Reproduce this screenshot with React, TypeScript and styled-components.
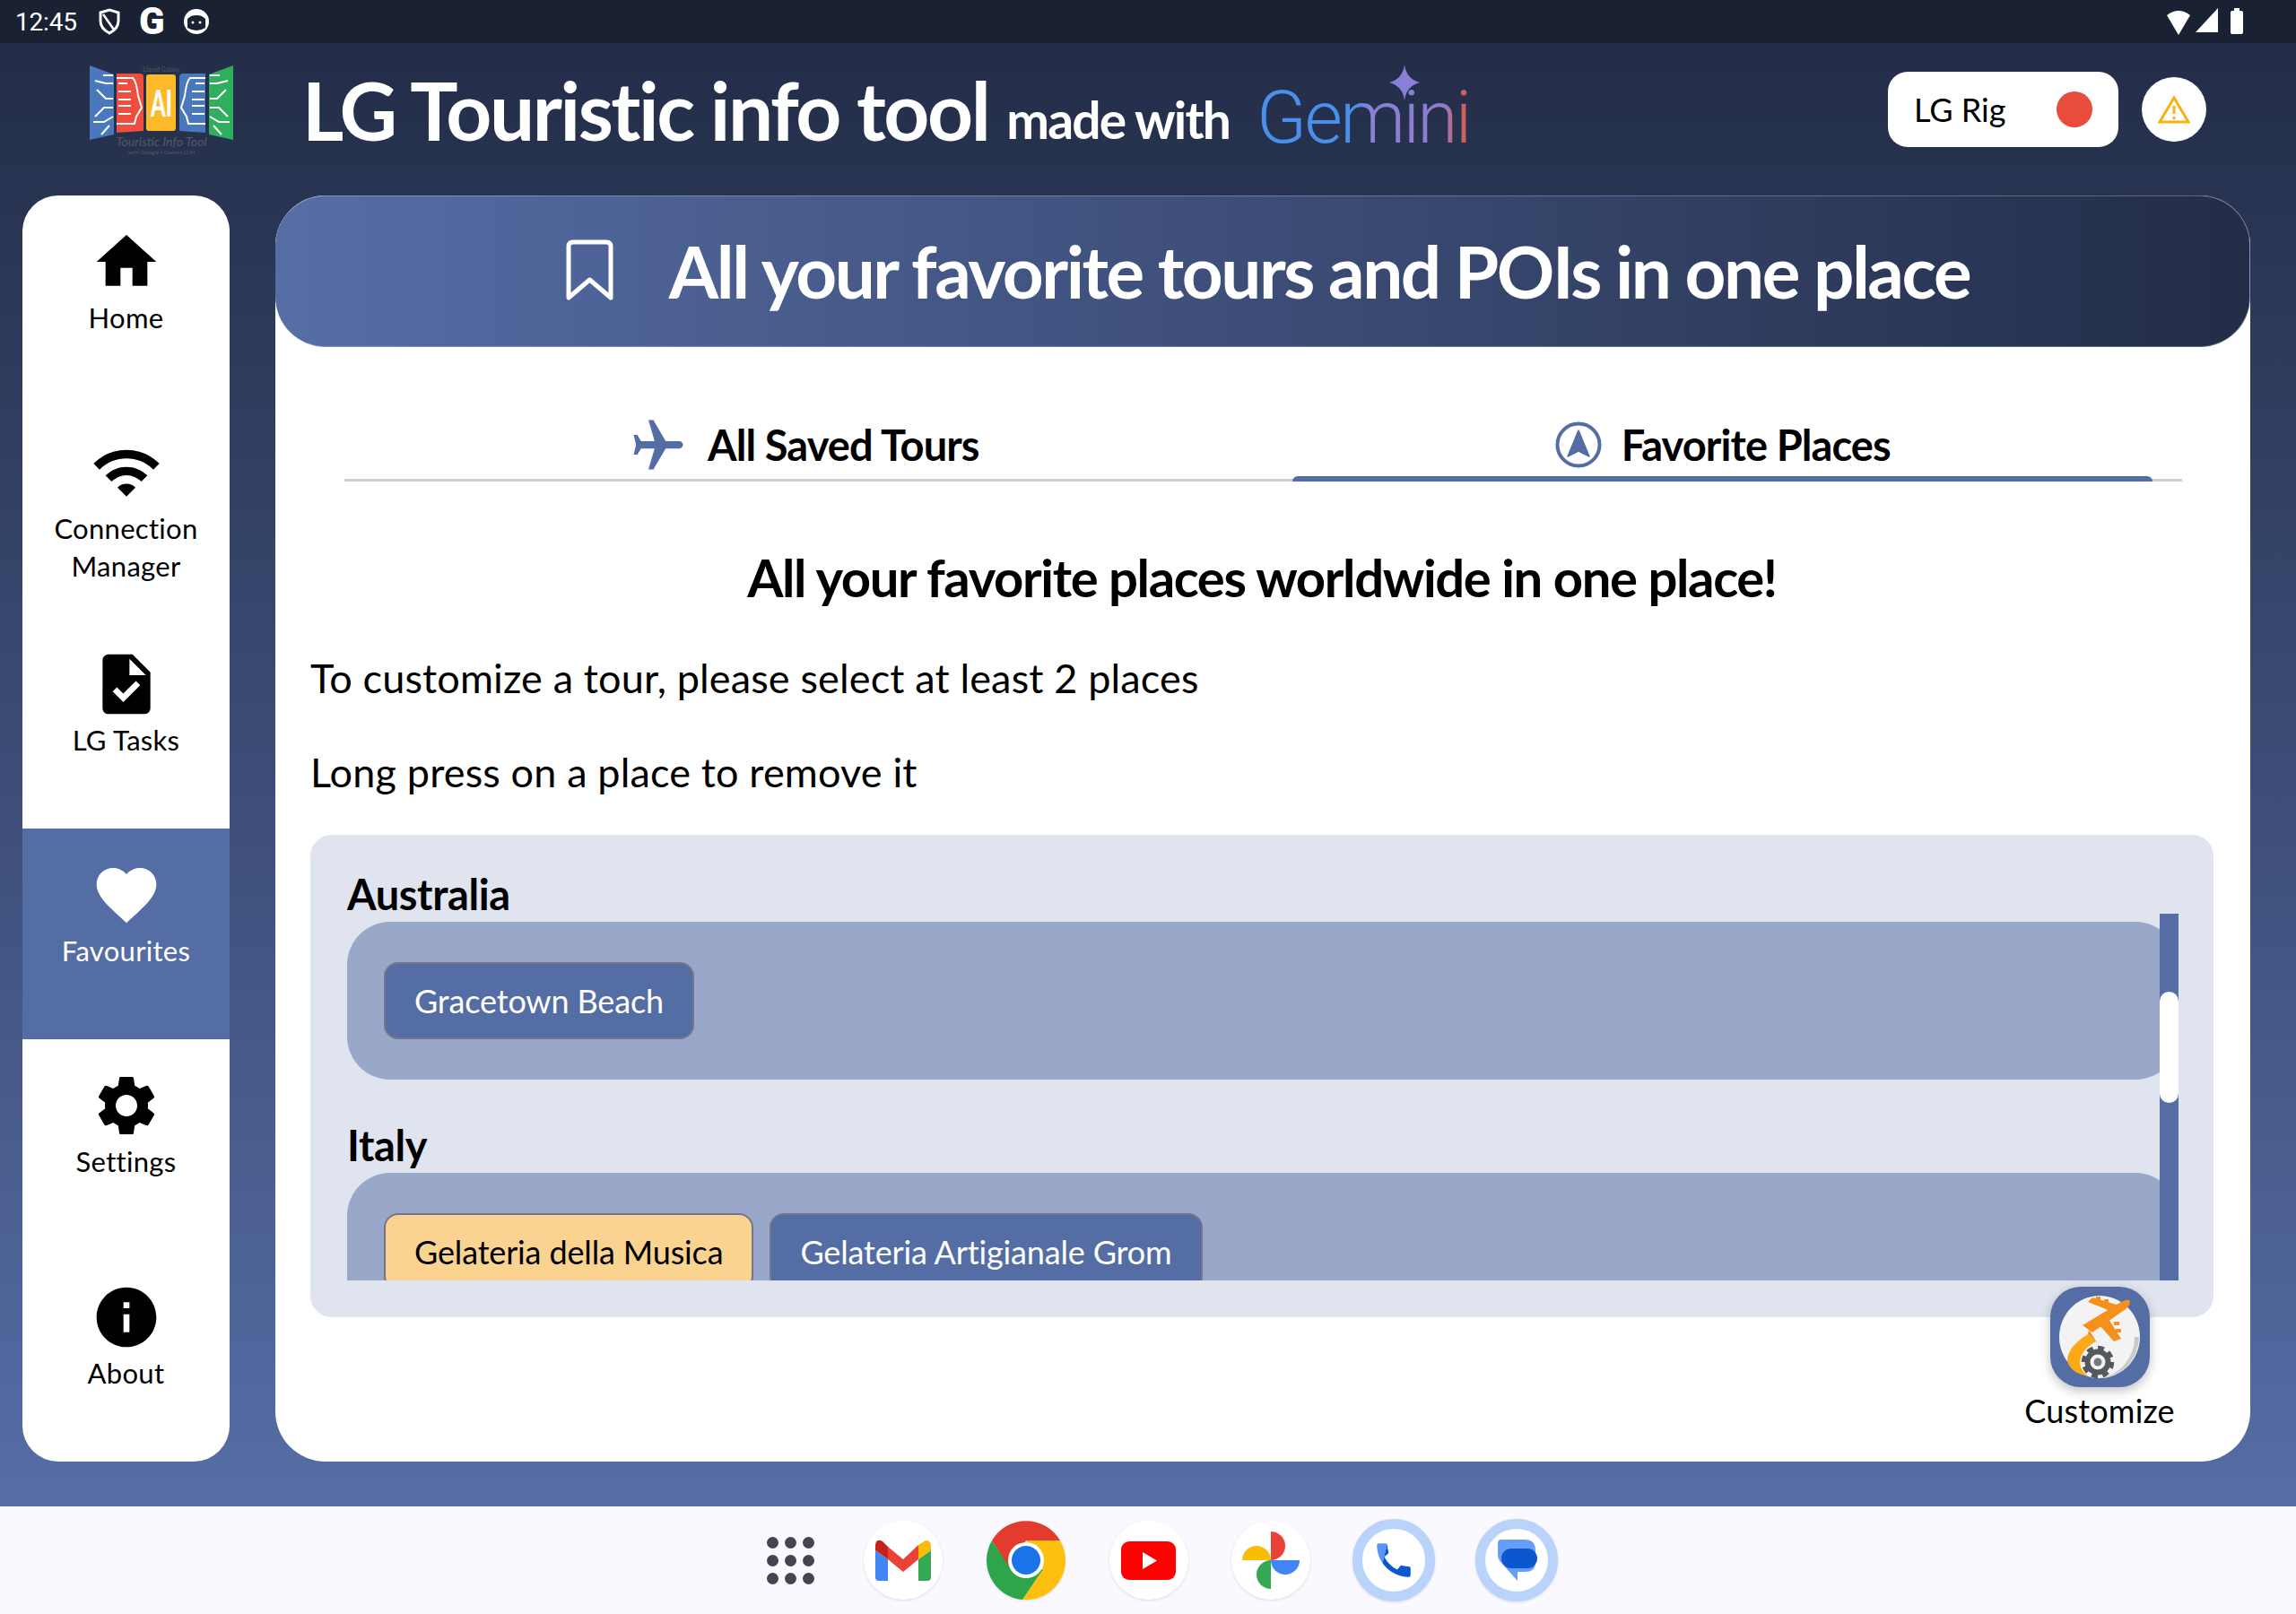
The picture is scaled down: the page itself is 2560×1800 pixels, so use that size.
import React from 'react';
import styled, { createGlobalStyle } from 'styled-components';
import { MdHome, MdWifi, MdTask, MdFavorite, MdSettings, MdInfo, MdAirplanemodeActive } from 'react-icons/md';

const GlobalStyle = createGlobalStyle`
  html, body {
    margin: 0;
    padding: 0;
    background: #f9f9ff;
  }
  * {
    box-sizing: border-box;
  }
`;

const primary = '#556da5';

const Page = styled.div`
  width: 2560px;
  height: 1800px;
  display: flex;
  flex-direction: column;
  overflow: hidden;
  font-family: Lato, 'Liberation Sans', sans-serif;
  color: #000;
`;

const StatusBar = styled.div`
  height: 48px;
  flex: none;
  display: flex;
  align-items: center;
  justify-content: space-between;
  padding: 0 56px 0 17px;
  background: #1a2133;
  color: #fff;
`;

const StatusGroup = styled.div`
  display: flex;
  align-items: center;
`;

const Clock = styled.span`
  font-family: Roboto, sans-serif;
  font-size: 28px;
  width: 93px;
  letter-spacing: -0.2px;
`;

const StatusG = styled.span`
  font-family: Roboto, sans-serif;
  font-weight: 900;
  font-size: 42px;
  line-height: 48px;
  margin: 0 20px 0 21px;
`;

const AppArea = styled.div`
  flex: 1;
  display: flex;
  flex-direction: column;
  background: linear-gradient(180deg, #232d48 0%, #566da6 100%);
`;

const Header = styled.header`
  height: 170px;
  flex: none;
  display: flex;
  align-items: center;
  padding: 0 0 22px 100px;
  color: #fff;
`;

const AppTitle = styled.h1`
  margin: 0 0 0 77px;
  font-size: 89px;
  font-weight: 700;
  letter-spacing: -2.45px;
  white-space: nowrap;
  line-height: 1;
`;

const TitleSmall = styled.span`
  font-size: 57px;
  font-weight: 700;
  letter-spacing: -1.9px;
  margin: 22px 0 0 20px;
  white-space: nowrap;
  line-height: 1;
`;

const GeminiMark = styled.div`
  position: relative;
  margin: 18px 0 0 30px;
`;

const GeminiWord = styled.span`
  display: block;
  font-family: Roboto, sans-serif;
  font-weight: 300;
  font-size: 82px;
  line-height: 1;
  letter-spacing: -2.6px;
  background: linear-gradient(90deg, #4a90ea 0%, #4a90ea 47%, #8a7fd6 52%, #8f7dcc 88%, #d05f62 94%);
  -webkit-background-clip: text;
  background-clip: text;
  color: transparent;
`;

const GeminiStar = styled.svg`
  position: absolute;
  left: 148px;
  top: -18px;
  width: 34px;
  height: 40px;
`;

const HeaderRight = styled.div`
  margin-left: auto;
  display: flex;
  align-items: center;
  gap: 26px;
  padding-right: 100px;
`;

const RigPill = styled.div`
  width: 257px;
  height: 84px;
  border-radius: 22px;
  background: #fff;
  color: #000;
  display: flex;
  align-items: center;
  justify-content: space-between;
  padding: 0 29px;
  font-size: 36px;
`;

const RigDot = styled.span`
  width: 40px;
  height: 40px;
  border-radius: 50%;
  background: #e74c3c;
`;

const AlertButton = styled.div`
  width: 72px;
  height: 72px;
  border-radius: 50%;
  background: #fff;
  display: flex;
  align-items: center;
  justify-content: center;
`;

const Body = styled.div`
  flex: 1;
  display: flex;
  gap: 51px;
  padding: 0 51px 50px 25px;
  min-height: 0;
`;

const Sidebar = styled.nav`
  width: 231px;
  flex: none;
  background: #fff;
  border-radius: 40px;
  overflow: hidden;
  display: flex;
  flex-direction: column;
`;

const NavItem = styled.div<{ $active?: boolean }>`
  flex: 1;
  display: flex;
  flex-direction: column;
  align-items: center;
  padding-top: 34px;
  background: ${props => (props.$active ? primary : 'transparent')};
  color: ${props => (props.$active ? '#fff' : '#000')};
`;

const NavLabel = styled.span`
  font-size: 31px;
  line-height: 42px;
  margin-top: 1px;
  text-align: center;
  width: 200px;
  letter-spacing: 0.3px;
`;

const Main = styled.main`
  flex: 1;
  min-width: 0;
  position: relative;
  background: #fff;
  border-radius: 56px;
  display: flex;
  flex-direction: column;
`;

const Banner = styled.div`
  height: 169px;
  flex: none;
  border-radius: 56px;
  background: linear-gradient(90deg, #566da6 0%, #232d48 100%);
  border: 1px solid rgba(255, 255, 255, 0.25);
  border-left: none;
  display: flex;
  align-items: center;
  justify-content: center;
  gap: 62px;
  color: #fff;
  padding: 0 0 2px 12px;
`;

const BannerTitle = styled.h2`
  margin: 0;
  font-size: 80px;
  font-weight: 700;
  letter-spacing: -2.45px;
  white-space: nowrap;
  line-height: 1;
`;

const Tabs = styled.div`
  height: 150px;
  flex: none;
  margin: 0 76px 0 77px;
  display: flex;
  border-bottom: 3px solid #cfcdd8;
`;

const Tab = styled.div<{ $active?: boolean }>`
  flex: 1;
  position: relative;
  display: flex;
  align-items: center;
  justify-content: center;
  gap: 22px;
  padding-top: 70px;
  font-size: 47px;
  font-weight: 700;
  letter-spacing: -0.9px;
  color: ${primary};

  &::after {
    content: '';
    display: ${props => (props.$active ? 'block' : 'none')};
    position: absolute;
    left: 32px;
    right: 33px;
    bottom: -3px;
    height: 6px;
    border-radius: 6px 6px 0 0;
    background: ${primary};
  }
`;

const TabText = styled.span`
  color: #000;
`;

const PlaneIcon = styled(MdAirplanemodeActive)`
  transform: rotate(90deg);
`;

const Content = styled.section`
  padding: 0 41px 0 39px;
`;

const Headline = styled.h3`
  margin: 77px 0 0;
  text-align: center;
  font-size: 58px;
  line-height: 60px;
  font-weight: 700;
  letter-spacing: -1.35px;
`;

const Hint = styled.p`
  margin: 0;
  font-size: 45px;
  line-height: 60px;
  letter-spacing: 0.15px;
  padding-top: 52px;

  & + & {
    padding-top: 45px;
  }
`;

const Panel = styled.div`
  position: relative;
  height: 538px;
  margin-top: 40px;
  padding: 33px 39px 41px 41px;
  border-radius: 24px;
  background: #e0e4ef;
`;

const ScrollArea = styled.div`
  position: relative;
  height: 464px;
  padding-top: 8px;
  overflow: hidden;
`;

const Country = styled.h4`
  margin: 0;
  height: 56px;
  font-size: 47px;
  line-height: 50px;
  font-weight: 700;
  letter-spacing: -0.4px;
`;

const PlaceBand = styled.div`
  height: 176px;
  margin-bottom: 48px;
  padding: 45px 41px;
  border-radius: 48px;
  background: #99a7c9;
  display: flex;
  gap: 18px;
`;

const PlaceChip = styled.div<{ $selected?: boolean }>`
  height: 86px;
  padding: 0 32px;
  display: flex;
  align-items: center;
  border-radius: 16px;
  border: 2px solid #76748c;
  font-size: 36px;
  letter-spacing: -0.15px;
  background: ${props => (props.$selected ? '#fbd391' : primary)};
  color: ${props => (props.$selected ? '#000' : '#fff')};
`;

const ScrollTrack = styled.div`
  position: absolute;
  top: 55px;
  right: 0;
  bottom: 0;
  width: 21px;
  background: ${primary};
`;

const ScrollThumb = styled.div`
  position: absolute;
  left: 0;
  right: 0;
  top: 87px;
  height: 124px;
  border-radius: 11px;
  background: #fff;
`;

const CustomizeFab = styled.div`
  position: absolute;
  top: 1217px;
  right: 68px;
  width: 200px;
  display: flex;
  flex-direction: column;
  align-items: center;
`;

const FabIcon = styled.div`
  width: 111px;
  height: 112px;
  border-radius: 34px;
  background: ${primary};
  box-shadow: 0 4px 12px rgba(0, 0, 0, 0.25);
  display: flex;
  align-items: center;
  justify-content: center;
`;

const FabLabel = styled.span`
  font-size: 36px;
  line-height: 44px;
  margin-top: 4px;
  letter-spacing: 0.2px;
`;

const BottomNav = styled.footer`
  height: 120px;
  flex: none;
  background: #f9f9ff;
  display: flex;
  align-items: center;
  padding-left: 855px;
`;

const AppGrid = styled.div`
  display: grid;
  grid-template-columns: repeat(3, 13px);
  grid-auto-rows: 13px;
  gap: 7px;
  margin-right: 55px;
`;

const AppDot = styled.span`
  border-radius: 50%;
  background: #44464f;
`;

const AppTray = styled.div`
  display: flex;
  align-items: center;
  gap: 48.8px;
`;

const AppIcon = styled.div<{ $ring?: boolean }>`
  width: ${props => (props.$ring ? '92px' : '88px')};
  height: ${props => (props.$ring ? '92px' : '88px')};
  margin: ${props => (props.$ring ? '0 -2px' : '0')};
  border-radius: 50%;
  background: #fff;
  box-shadow: 0 1px 3px rgba(0, 0, 0, 0.12);
  display: flex;
  align-items: center;
  justify-content: center;
  border: ${props => (props.$ring ? '11px solid #b9d3fb' : 'none')};
`;

const LogoMark = () => (
  <svg width="160" height="105" viewBox="100 70 160 105">
    <path d="M100 73 L127 83 V150 L100 156 Z" fill="#4a78bd" />
    <path d="M130 82 H156 Q160 82 160 86 V146 L130 148 Z" fill="#ee4d3f" />
    <rect x="163" y="83" width="33" height="63" rx="3" fill="#fdb92a" />
    <path d="M200 86 Q200 82 204 82 H229 V148 L200 146 Z" fill="#4a78bd" />
    <path d="M233 83 L260 73 V156 L233 150 Z" fill="#2fae5e" />
    <g stroke="#fff" strokeWidth="2" fill="none">
      <path d="M115 84 L126 84 M106 90 L118 93 L126 93 M108 100 L118 110 L126 110 M126 120 L116 120 L106 130 M126 130 L116 136 L104 136 M122 140 L113 150" />
      <path d="M130 87 H148 Q152 90 154 107 L158 120 L152 130 L150 138 H130 M132 93 H142 M132 102 H146 M132 111 H146 M132 118 H146 M132 127 H146" />
      <path d="M229 87 H212 Q208 90 206 107 L202 120 L208 130 L210 138 H229 M218 93 H228 M214 102 H228 M214 111 H228 M214 118 H228 M214 127 H228" />
      <path d="M245 84 L234 84 M254 90 L242 93 L234 93 M252 100 L242 110 L234 110 M234 120 L244 120 L254 130 M234 130 L244 136 L256 136 M238 140 L247 150" />
    </g>
    <text x="168" y="130" textLength="24" lengthAdjust="spacingAndGlyphs" fontFamily="Lato, sans-serif" fontWeight="900" fontSize="41" fill="#fff">AI</text>
    <text x="180" y="80" textAnchor="middle" fontFamily="Lato, sans-serif" fontSize="7" fill="#55565f">Liquid Galaxy</text>
    <text x="180" y="163" textAnchor="middle" fontFamily="Lato, sans-serif" fontStyle="italic" fontSize="14" fill="#565861">Touristic Info Tool</text>
    <text x="180" y="172" textAnchor="middle" fontFamily="Lato, sans-serif" fontSize="6.5" fill="#565861">with Google's Gemini LLM</text>
  </svg>
);

const ShieldIcon = () => (
  <svg width="24" height="30" viewBox="0 0 24 30" fill="none" stroke="#fff" strokeWidth="3">
    <path d="M2 5 L12 2 L22 5 V14 Q22 23 12 28 Q2 23 2 14 Z" />
    <path d="M5 7 L17 24" strokeWidth="2.5" />
  </svg>
);

const CatIcon = () => (
  <svg width="30" height="30" viewBox="0 0 30 30">
    <circle cx="15" cy="15" r="14" fill="#fff" />
    <path d="M5 12 L9 9 Q15 7 21 9 L25 12 V22 Q15 28 5 22 Z" fill="#1a2133" />
    <circle cx="11" cy="16" r="1.5" fill="#fff" />
    <circle cx="19" cy="16" r="1.5" fill="#fff" />
  </svg>
);

const StatusRight = () => (
  <svg width="88" height="30" viewBox="0 0 88 30" fill="#fff">
    <path d="M0 8 Q13 -2 26 8 L13 30 Z" />
    <path d="M57 0 V27 H32 Z" />
    <path d="M71 27 V5 Q71 3 73 3 H75 V0 H81 V3 H83 Q85 3 85 5 V27 Q85 29 83 29 H73 Q71 29 71 27 Z" />
  </svg>
);

const WarningIcon = () => (
  <svg width="38" height="34" viewBox="0 0 38 34" fill="none" stroke="#f6b20f" strokeWidth="3">
    <path d="M19 4 L35 31 H3 Z" />
    <path d="M19 13 V22 M19 25 V28" />
  </svg>
);

const BookmarkIcon = () => (
  <svg width="53" height="70" viewBox="0 0 53 70" fill="none" stroke="#fff" strokeWidth="5" strokeLinejoin="round">
    <path d="M8 3 H45 Q50 3 50 8 V65 L26.5 45 L3 65 V8 Q3 3 8 3 Z" />
  </svg>
);

const NavigationCircle = () => (
  <svg width="52" height="52" viewBox="0 0 52 52">
    <circle cx="26" cy="26" r="23.5" fill="none" stroke={primary} strokeWidth="4" />
    <path d="M26 10 L38 39 L26 33 L14 39 Z" fill={primary} stroke={primary} strokeWidth="1.5" strokeLinejoin="round" />
  </svg>
);

const CustomizeIcon = () => (
  <svg width="92" height="94" viewBox="0 0 92 94">
    <ellipse cx="46" cy="47" rx="45" ry="46" fill="#f2f3f2" />
    <path d="M90 47 A45 46 0 0 1 46 93 A45 46 0 0 0 85 47 Z" fill="#c9cacb" />
    <path d="M33 44 L42 52 Q24 62 24 76 Q25 86 34 91 Q14 88 10 74 Q10 58 33 44 Z" fill="#fca917" />
    <g fill="#f6901c">
      <path d="M27 34 L70 8 Q80 3 80 8 Q80 13 72 18 L38 42 Z" />
      <path d="M58 18 L33 8 L38 3 L68 12 Z" />
      <path d="M56 27 L70 49 L62 52 L46 34 Z" />
      <path d="M34 39 L43 53 L33 44 Z" />
      <rect x="42" y="2" width="5" height="5" />
      <rect x="51" y="5" width="5" height="5" />
      <rect x="62" y="30" width="6" height="4" />
      <rect x="64" y="38" width="6" height="4" />
    </g>
    <g transform="translate(44 75)">
      <circle r="16" fill="none" stroke="#55585c" strokeWidth="4.5" strokeDasharray="7 5.5" />
      <circle r="11.5" fill="none" stroke="#55585c" strokeWidth="6" />
      <circle r="8" fill="#f2f3f2" />
      <circle r="4.5" fill="#77797d" />
    </g>
  </svg>
);

const GmailIcon = () => (
  <svg width="62" height="46" viewBox="0 0 62 46">
    <path d="M0 12 L14 22 V46 H4 Q0 46 0 42 Z" fill="#4285f4" />
    <path d="M48 22 L62 12 V42 Q62 46 58 46 H48 Z" fill="#34a853" />
    <path d="M48 22 V6 L56 1 Q62 0 62 8 V12 Z" fill="#fbbc04" />
    <path d="M14 8 L31 22 L48 6 V22 L31 36 L14 22 Z" fill="#ea4335" />
    <path d="M0 8 Q0 -2 8 2 L14 8 V22 L0 12 Z" fill="#c5221f" />
  </svg>
);

const ChromeIcon = () => (
  <svg width="88" height="88" viewBox="-44 -44 88 88">
    <path d="M-38 -22 A44 44 0 0 1 38 -22 H0 L-17 12 Z" fill="#e33b2e" />
    <path d="M0 -22 H38 A44 44 0 0 1 -4 44 L19 10 Z" fill="#fdc010" />
    <path d="M-38 -22 L-17 10 L19 10 L-4 44 A44 44 0 0 1 -38 -22 Z" fill="#2ea54a" />
    <circle r="20" fill="#fff" />
    <circle r="16" fill="#1a73e8" />
  </svg>
);

const YoutubeIcon = () => (
  <svg width="61" height="43" viewBox="0 0 61 43">
    <rect width="61" height="43" rx="9" fill="#f00" />
    <path d="M24 12 L40 21.5 L24 31 Z" fill="#fff" />
  </svg>
);

const PhotosIcon = () => (
  <svg width="66" height="66" viewBox="-33 -33 66 66">
    <path d="M0 0 V-32 A16 16 0 0 1 0 0 Z" fill="#ea4335" />
    <path d="M0 0 H-32 A16 16 0 0 1 0 0 Z" fill="#fbbc04" />
    <path d="M0 0 V32 A16 16 0 0 1 0 0 Z" fill="#34a853" />
    <path d="M0 0 H32 A16 16 0 0 1 0 0 Z" fill="#4285f4" />
  </svg>
);

const PhoneIcon = () => (
  <svg width="50" height="50" viewBox="0 0 24 24">
    <defs>
      <linearGradient id="phoneTone" x1="0" y1="0" x2="1" y2="0.25">
        <stop offset="0.3" stopColor="#5a94f8" />
        <stop offset="0.3" stopColor="#0b57d0" />
      </linearGradient>
    </defs>
    <path
      fill="url(#phoneTone)"
      d="M20.01 15.38c-1.23 0-2.42-.2-3.53-.56-.35-.12-.74-.03-1.01.24l-1.57 1.97c-2.83-1.35-5.48-3.9-6.89-6.83l1.95-1.66c.27-.28.35-.67.24-1.02-.37-1.11-.56-2.3-.56-3.53 0-.54-.45-.99-.99-.99H4.19C3.65 3 3 3.24 3 3.99 3 13.28 10.73 21 20.01 21c.71 0 .99-.63.99-1.18v-3.45c0-.54-.45-.99-.99-.99z"
    />
  </svg>
);

const MessagesIcon = () => (
  <svg width="50" height="50" viewBox="0 0 50 50">
    <path d="M8 2 H34 Q46 2 46 14 V28 Q46 38 34 38 H26 V48 L8 28 Q4 24 4 18 V6 Q4 2 8 2 Z" fill="#669df6" />
    <rect x="8" y="12" width="40" height="22" rx="11" fill="#0b57d0" />
  </svg>
);

const navItems = [
  { label: 'Home', Icon: MdHome },
  { label: 'Connection Manager', Icon: MdWifi },
  { label: 'LG Tasks', Icon: MdTask },
  { label: 'Favourites', Icon: MdFavorite, active: true },
  { label: 'Settings', Icon: MdSettings },
  { label: 'About', Icon: MdInfo },
];

export default function App() {
  return (
    <Page>
      <GlobalStyle />
      <StatusBar>
        <StatusGroup>
          <Clock>12:45</Clock>
          <ShieldIcon />
          <StatusG>G</StatusG>
          <CatIcon />
        </StatusGroup>
        <StatusRight />
      </StatusBar>

      <AppArea>
        <Header>
          <LogoMark />
          <AppTitle>LG Touristic info tool</AppTitle>
          <TitleSmall>made with</TitleSmall>
          <GeminiMark>
            <GeminiWord>Gemini</GeminiWord>
            <GeminiStar viewBox="0 0 34 40">
              <path d="M17 0 Q19 16 34 20 Q19 24 17 40 Q15 24 0 20 Q15 16 17 0 Z" fill="#8a7fd6" />
            </GeminiStar>
          </GeminiMark>
          <HeaderRight>
            <RigPill>
              LG Rig
              <RigDot />
            </RigPill>
            <AlertButton>
              <WarningIcon />
            </AlertButton>
          </HeaderRight>
        </Header>

        <Body>
          <Sidebar>
            {navItems.map(({ label, Icon, active }) => (
              <NavItem key={label} $active={active}>
                <Icon size={80} />
                <NavLabel>{label}</NavLabel>
              </NavItem>
            ))}
          </Sidebar>

          <Main>
            <Banner>
              <BookmarkIcon />
              <BannerTitle>All your favorite tours and POIs in one place</BannerTitle>
            </Banner>

            <Tabs>
              <Tab>
                <PlaneIcon size={66} />
                <TabText>All Saved Tours</TabText>
              </Tab>
              <Tab $active>
                <NavigationCircle />
                <TabText>Favorite Places</TabText>
              </Tab>
            </Tabs>

            <Content>
              <Headline>All your favorite places worldwide in one place!</Headline>
              <Hint>To customize a tour, please select at least 2 places</Hint>
              <Hint>Long press on a place to remove it</Hint>

              <Panel>
                <ScrollArea>
                  <Country>Australia</Country>
                  <PlaceBand>
                    <PlaceChip>Gracetown Beach</PlaceChip>
                  </PlaceBand>
                  <Country>Italy</Country>
                  <PlaceBand>
                    <PlaceChip $selected>Gelateria della Musica</PlaceChip>
                    <PlaceChip>Gelateria Artigianale Grom</PlaceChip>
                  </PlaceBand>
                  <ScrollTrack>
                    <ScrollThumb />
                  </ScrollTrack>
                </ScrollArea>
              </Panel>
            </Content>

            <CustomizeFab>
              <FabIcon>
                <CustomizeIcon />
              </FabIcon>
              <FabLabel>Customize</FabLabel>
            </CustomizeFab>
          </Main>
        </Body>
      </AppArea>

      <BottomNav>
        <AppGrid>
          {Array.from({ length: 9 }).map((_, i) => (
            <AppDot key={i} />
          ))}
        </AppGrid>
        <AppTray>
          <AppIcon>
            <GmailIcon />
          </AppIcon>
          <AppIcon>
            <ChromeIcon />
          </AppIcon>
          <AppIcon>
            <YoutubeIcon />
          </AppIcon>
          <AppIcon>
            <PhotosIcon />
          </AppIcon>
          <AppIcon $ring>
            <PhoneIcon />
          </AppIcon>
          <AppIcon $ring>
            <MessagesIcon />
          </AppIcon>
        </AppTray>
      </BottomNav>
    </Page>
  );
}
